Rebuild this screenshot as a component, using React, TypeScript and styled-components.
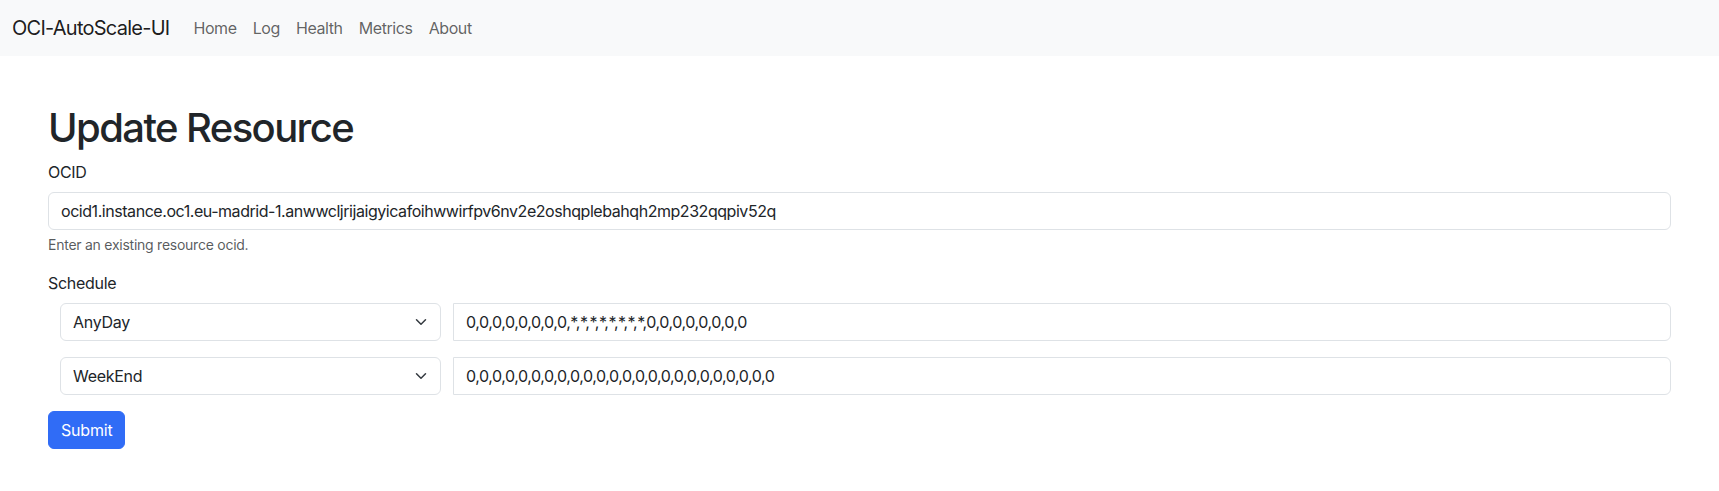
import React from "react";
import styled, { createGlobalStyle } from "styled-components";

const Global = createGlobalStyle`
  html, body { margin: 0; padding: 0; background: #fff; }
  body {
    font-family: Inter, "Noto Sans", "Liberation Sans", sans-serif;
    font-size: 16px;
    line-height: 1.5;
    color: #212529;
  }
  * { box-sizing: border-box; }
`;

const NavBar = styled.nav`
  background: #f8f9fa;
  height: 56px;
  padding: 8px 12px;
  display: flex;
  align-items: center;
`;

const Brand = styled.a`
  font-size: 20px;
  line-height: 30px;
  padding: 5px 0;
  margin-right: 16px;
  color: rgba(0, 0, 0, 0.9);
  text-decoration: none;
  letter-spacing: -0.75px;
`;

const NavList = styled.div`
  display: flex;
`;

const NavLink = styled.a`
  padding: 8px;
  line-height: 24px;
  color: rgba(0, 0, 0, 0.62);
  text-decoration: none;
  letter-spacing: -0.4px;
`;

const Container = styled.main`
  padding: 48px 48px 0;
`;

const Title = styled.h1`
  font-size: 40px;
  font-weight: 500;
  line-height: 48px;
  margin: 0 0 8px;
  letter-spacing: -1.6px;
`;

const Field = styled.div`
  margin-bottom: 16px;
`;

const Label = styled.label`
  display: block;
  margin-bottom: 8px;
  line-height: 24px;
  letter-spacing: -0.3px;
`;

const TextInput = styled.input<{ $joined?: boolean }>`
  display: block;
  width: 100%;
  height: 38px;
  padding: 6px 12px;
  font: inherit;
  color: #212529;
  background: #fff;
  border: 1px solid #dee2e6;
  border-radius: ${(p) => (p.$joined ? "0 6px 6px 0" : "6px")};
  outline: none;
  letter-spacing: -0.45px;
`;

const Help = styled.div`
  margin-top: 4px;
  font-size: 14px;
  line-height: 21px;
  color: rgba(33, 37, 41, 0.75);
  letter-spacing: -0.25px;
`;

const ScheduleRow = styled.div`
  display: flex;
  gap: 12px;
  padding-left: 12px;
  margin-bottom: 16px;
`;

const SelectWrap = styled.div`
  position: relative;
  width: 381px;
  flex: none;
`;

const Select = styled.select`
  appearance: none;
  -webkit-appearance: none;
  width: 100%;
  height: 38px;
  padding: 6px 36px 6px 12px;
  font: inherit;
  color: #212529;
  background: #fff;
  border: 1px solid #dee2e6;
  border-radius: 6px;
  outline: none;
  letter-spacing: -0.3px;
`;

const Chevron = styled.svg`
  position: absolute;
  right: 12px;
  top: 13px;
  width: 16px;
  height: 12px;
  pointer-events: none;
`;

const InputCell = styled.div`
  flex: 1;
`;

const SubmitButton = styled.button`
  height: 38px;
  padding: 6px 12px;
  font: inherit;
  color: #fff;
  background: #306cf6;
  border: 1px solid #306cf6;
  border-radius: 6px;
  letter-spacing: -0.2px;
`;

const schedules = [
  { day: "AnyDay", value: "0,0,0,0,0,0,0,0,*,*,*,*,*,*,*,*,0,0,0,0,0,0,0,0" },
  { day: "WeekEnd", value: "0,0,0,0,0,0,0,0,0,0,0,0,0,0,0,0,0,0,0,0,0,0,0,0" },
];

const days = ["AnyDay", "WeekDay", "WeekEnd", "Monday", "Tuesday", "Wednesday", "Thursday", "Friday", "Saturday", "Sunday"];

export default function App() {
  return (
    <>
      <Global />
      <NavBar>
        <Brand href="#">OCI-AutoScale-UI</Brand>
        <NavList>
          {["Home", "Log", "Health", "Metrics", "About"].map((l) => (
            <NavLink key={l} href="#">
              {l}
            </NavLink>
          ))}
        </NavList>
      </NavBar>
      <Container>
        <Title>Update Resource</Title>
        <Field>
          <Label>OCID</Label>
          <TextInput
            readOnly
            value="ocid1.instance.oc1.eu-madrid-1.anwwcljrijaigyicafoihwwirfpv6nv2e2oshqplebahqh2mp232qqpiv52q"
          />
          <Help>Enter an existing resource ocid.</Help>
        </Field>
        <Label>Schedule</Label>
        {schedules.map((s) => (
          <ScheduleRow key={s.day}>
            <SelectWrap>
              <Select defaultValue={s.day}>
                {days.map((d) => (
                  <option key={d}>{d}</option>
                ))}
              </Select>
              <Chevron viewBox="0 0 16 16">
                <path
                  fill="none"
                  stroke="#343a40"
                  strokeLinecap="round"
                  strokeLinejoin="round"
                  strokeWidth="2"
                  d="m2 5 6 6 6-6"
                />
              </Chevron>
            </SelectWrap>
            <InputCell>
              <TextInput $joined readOnly value={s.value} />
            </InputCell>
          </ScheduleRow>
        ))}
        <SubmitButton>Submit</SubmitButton>
      </Container>
    </>
  );
}
